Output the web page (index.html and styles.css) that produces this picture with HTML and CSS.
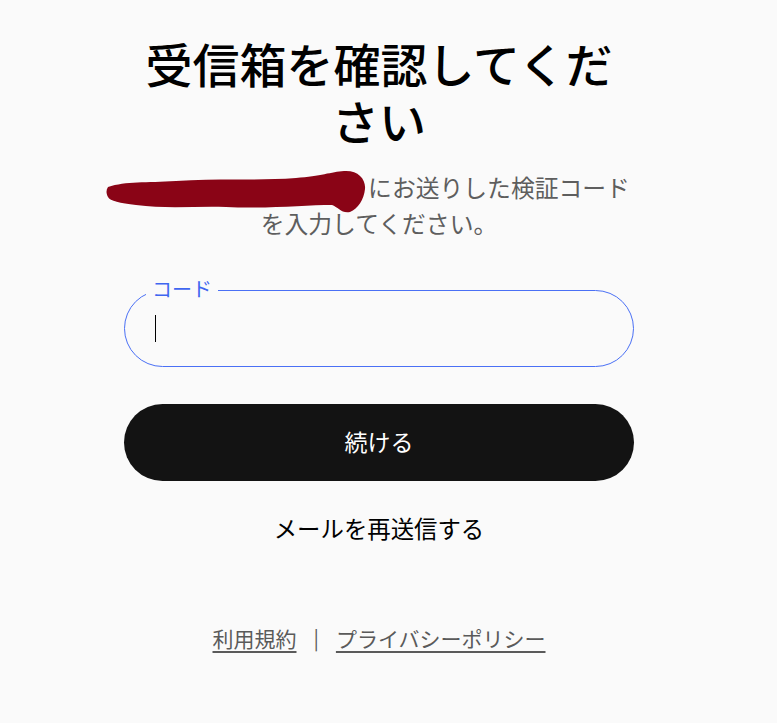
FILE: index.html
```html
<!DOCTYPE html>
<html lang="ja">
<head>
<meta charset="utf-8">
<link rel="stylesheet" href="styles.css">
</head>
<body>
<main class="page">
  <div class="col">
    <h1 class="title">受信箱を確認してください</h1>
    <p class="sub"><span class="redact"><svg width="262" height="46" viewBox="0 0 262 46"><path d="M2,18 C20,12 40,14 70,12 C110,9 150,12 190,9 C215,7 225,3 238,2 C252,1 260,10 259,20 C258,30 252,40 244,43 C236,45 232,38 226,36 C200,36 160,40 120,38 C90,37 60,40 30,36 C14,34 4,32 2,28 C0,24 0,21 2,18 Z" fill="#8a0416"/></svg></span>にお送りした検証コードを入力してください。</p>
    <div class="field">
      <span class="label">コード</span>
      <span class="caret"></span>
    </div>
    <button class="btn">続ける</button>
    <a class="resend">メールを再送信する</a>
    <nav class="footer">
      <a class="flink">利用規約</a>
      <span class="sep">|</span>
      <a class="flink">プライバシーポリシー</a>
    </nav>
  </div>
</main>
</body>
</html>
```
FILE: styles.css
```css
html, body {
  margin: 0;
  padding: 0;
  background: #fafafa;
  font-family: "Noto Sans CJK JP", "Noto Sans", sans-serif;
}
.page {
  padding: 34px 0 0 124px;
}
.col {
  width: 510px;
  display: flex;
  flex-direction: column;
  align-items: center;
}
.title {
  margin: 0;
  width: 490px;
  font-size: 47px;
  line-height: 57px;
  font-weight: 500;
  color: #000;
  text-align: center;
}
.sub {
  margin: 21px 0 0;
  width: 512px;
  font-size: 23.8px;
  line-height: 36px;
  color: #5e5e5e;
  text-align: center;
}
.redact {
  display: inline-block;
  width: 240px;
  height: 36px;
  vertical-align: top;
  position: relative;
}
.redact svg {
  position: absolute;
  left: -22px;
  top: 0;
}
.field {
  margin-top: 49px;
  width: 510px;
  height: 77px;
  box-sizing: border-box;
  border: 1px solid #4a70f5;
  border-radius: 39px;
  position: relative;
  display: flex;
  align-items: center;
  padding-left: 30px;
}
.label {
  position: absolute;
  left: 21px;
  top: -15px;
  padding: 0 6px;
  background: #fafafa;
  color: #3f66f0;
  font-size: 20px;
  line-height: 26px;
}
.caret {
  width: 1px;
  height: 27px;
  background: #000;
}
.btn {
  margin-top: 37px;
  width: 510px;
  height: 77px;
  border: none;
  border-radius: 39px;
  background: #131313;
  color: #fff;
  font-family: inherit;
  font-size: 23px;
  line-height: 30px;
  padding: 0 0 4px;
}
.resend {
  margin-top: 32px;
  font-size: 23.4px;
  line-height: 30px;
  color: #000;
}
.footer {
  margin-top: 80px;
  display: flex;
  gap: 17px;
  align-items: center;
  font-size: 21px;
  line-height: 30px;
  color: #5a5a5a;
}
.flink {
  text-decoration: underline;
  text-underline-offset: 4px;
}
.sep {
  font-size: 20px;
}
```
